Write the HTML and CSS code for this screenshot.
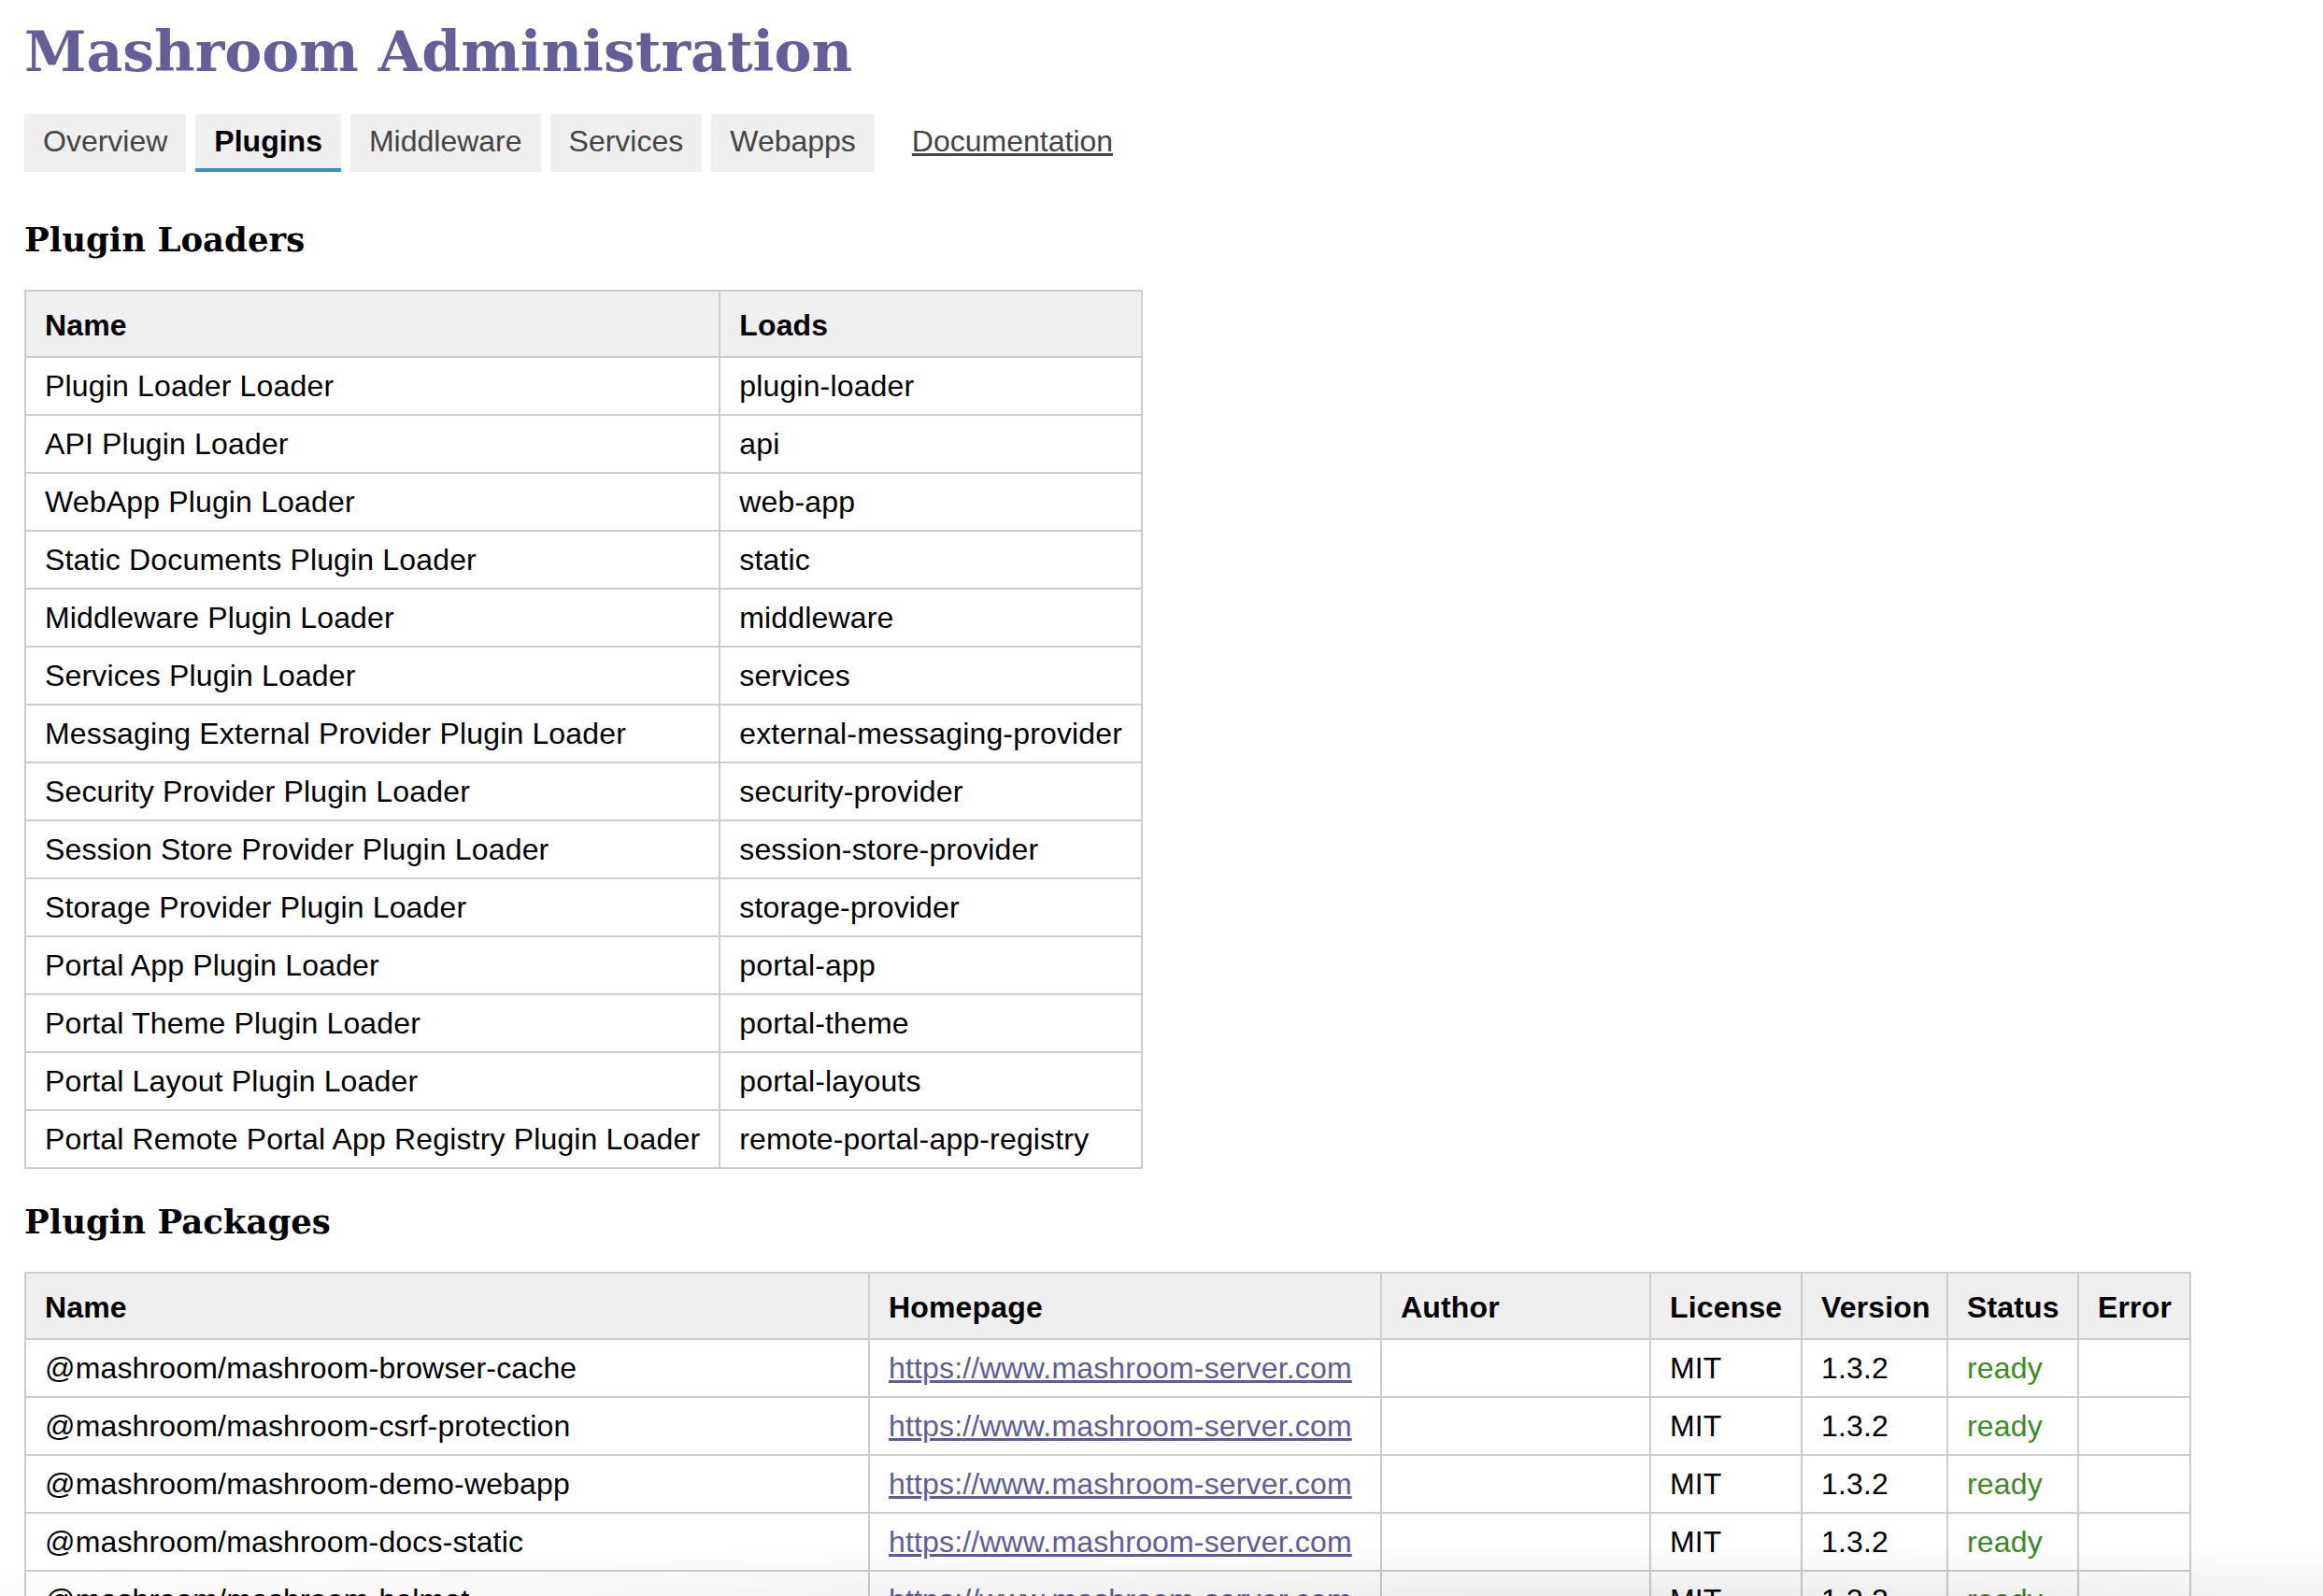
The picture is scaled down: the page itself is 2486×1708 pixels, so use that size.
FILE: index.html
```html
<!DOCTYPE html>
<html>
<head>
<meta charset="utf-8">
<title>Mashroom Administration</title>
<link rel="stylesheet" href="styles.css">
</head>
<body>
<h1 class="title">Mashroom Administration</h1>
<nav class="tabs">
  <a class="tab">Overview</a>
  <a class="tab active">Plugins</a>
  <a class="tab">Middleware</a>
  <a class="tab">Services</a>
  <a class="tab">Webapps</a>
  <a class="doc-link" href="#">Documentation</a>
</nav>

<h2 class="section">Plugin Loaders</h2>
<table class="grid">
  <thead><tr><th>Name</th><th>Loads</th></tr></thead>
  <tbody>
    <tr><td>Plugin Loader Loader</td><td>plugin-loader</td></tr>
    <tr><td>API Plugin Loader</td><td>api</td></tr>
    <tr><td>WebApp Plugin Loader</td><td>web-app</td></tr>
    <tr><td>Static Documents Plugin Loader</td><td>static</td></tr>
    <tr><td>Middleware Plugin Loader</td><td>middleware</td></tr>
    <tr><td>Services Plugin Loader</td><td>services</td></tr>
    <tr><td>Messaging External Provider Plugin Loader</td><td>external-messaging-provider</td></tr>
    <tr><td>Security Provider Plugin Loader</td><td>security-provider</td></tr>
    <tr><td>Session Store Provider Plugin Loader</td><td>session-store-provider</td></tr>
    <tr><td>Storage Provider Plugin Loader</td><td>storage-provider</td></tr>
    <tr><td>Portal App Plugin Loader</td><td>portal-app</td></tr>
    <tr><td>Portal Theme Plugin Loader</td><td>portal-theme</td></tr>
    <tr><td>Portal Layout Plugin Loader</td><td>portal-layouts</td></tr>
    <tr><td>Portal Remote Portal App Registry Plugin Loader</td><td>remote-portal-app-registry</td></tr>
  </tbody>
</table>

<h2 class="section">Plugin Packages</h2>
<table class="grid packages">
  <colgroup>
    <col class="c-name"><col class="c-home"><col class="c-author"><col class="c-license"><col class="c-version"><col class="c-status"><col class="c-error">
  </colgroup>
  <thead><tr><th>Name</th><th>Homepage</th><th>Author</th><th>License</th><th>Version</th><th>Status</th><th>Error</th></tr></thead>
  <tbody>
    <tr><td>@mashroom/mashroom-browser-cache</td><td><a href="#">https://www.mashroom-server.com</a></td><td></td><td>MIT</td><td>1.3.2</td><td class="ready">ready</td><td></td></tr>
    <tr><td>@mashroom/mashroom-csrf-protection</td><td><a href="#">https://www.mashroom-server.com</a></td><td></td><td>MIT</td><td>1.3.2</td><td class="ready">ready</td><td></td></tr>
    <tr><td>@mashroom/mashroom-demo-webapp</td><td><a href="#">https://www.mashroom-server.com</a></td><td></td><td>MIT</td><td>1.3.2</td><td class="ready">ready</td><td></td></tr>
    <tr><td>@mashroom/mashroom-docs-static</td><td><a href="#">https://www.mashroom-server.com</a></td><td></td><td>MIT</td><td>1.3.2</td><td class="ready">ready</td><td></td></tr>
    <tr><td>@mashroom/mashroom-helmet</td><td><a href="#">https://www.mashroom-server.com</a></td><td></td><td>MIT</td><td>1.3.2</td><td class="ready">ready</td><td></td></tr>
    <tr><td>@mashroom/mashroom-http-proxy</td><td><a href="#">https://www.mashroom-server.com</a></td><td></td><td>MIT</td><td>1.3.2</td><td class="ready">ready</td><td></td></tr>
  </tbody>
</table>
<div class="shade"></div>
</body>
</html>
```

FILE: styles.css
```css
html, body {
  margin: 0;
  padding: 0;
  background: #fff;
}
body {
  padding: 0 26px;
  font-family: "Liberation Sans", Arial, sans-serif;
  font-size: 32px;
  color: #000;
}
.title {
  margin: 0;
  padding-top: 15px;
  font-family: "DejaVu Serif", Georgia, serif;
  font-weight: bold;
  font-size: 60px;
  line-height: 80px;
  color: #625f9b;
}
.tabs {
  display: flex;
  align-items: stretch;
  gap: 10px;
  margin-top: 27px;
  padding-bottom: 16px;
}
.tab {
  display: block;
  background: #efefef;
  color: #444;
  padding: 11px 20px 10px;
  line-height: 37px;
  border-bottom: 4px solid transparent;
}
.tab.active {
  font-weight: bold;
  color: #000;
  border-bottom-color: #3b8fc4;
}
.doc-link {
  align-self: center;
  margin-left: 30px;
  color: #444;
  text-decoration: underline;
  padding-bottom: 4px;
}
.section {
  margin: 37px 0 33px;
  font-family: "DejaVu Serif", Georgia, serif;
  font-weight: bold;
  font-size: 35.5px;
  line-height: 40px;
}
.grid {
  border-collapse: collapse;
  border: 2px solid #cccccc;
}
.grid th, .grid td {
  border: 2px solid #cccccc;
  text-align: left;
  padding: 12px 20px 11px;
  line-height: 37px;
  white-space: nowrap;
  letter-spacing: 0.16px;
}
.grid th {
  background: #efefef;
  padding-top: 18px;
  padding-bottom: 14px;
}
.packages {
  table-layout: fixed;
  width: 2317px;
}
.c-name { width: 903px; }
.c-home { width: 548px; }
.c-author { width: 288px; }
.c-license { width: 162px; }
.c-version { width: 156px; }
.c-status { width: 140px; }
.c-error { width: 120px; }
.grid a {
  color: #5e5d99;
  text-decoration: underline;
}
.ready {
  color: #3c8a26;
}
.shade {
  position: fixed;
  left: 0;
  right: 0;
  bottom: 0;
  height: 80px;
  pointer-events: none;
  background: radial-gradient(ellipse 120% 100% at 70% 100%, rgba(0,0,0,0.07), rgba(0,0,0,0) 70%);
}
```
